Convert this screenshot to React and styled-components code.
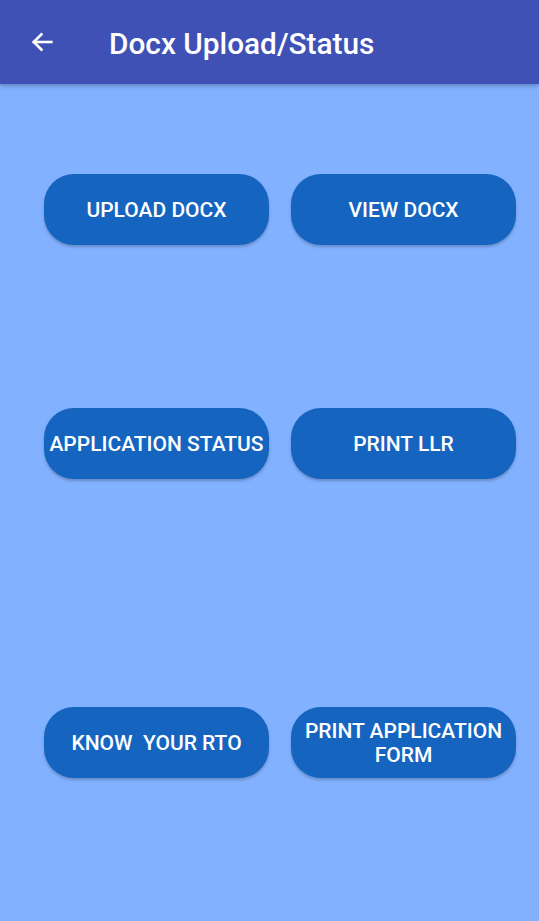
import React from 'react';
import styled, { createGlobalStyle } from 'styled-components';

const GlobalStyle = createGlobalStyle`
  html, body {
    margin: 0;
    padding: 0;
    background: #82b1ff;
    font-family: Roboto, "Noto Sans", sans-serif;
  }
`;

const Page = styled.div`
  width: 539px;
  height: 921px;
  background: #82b1ff;
  display: flex;
  flex-direction: column;
`;

const Toolbar = styled.header`
  height: 84px;
  background: #3f51b5;
  display: flex;
  align-items: center;
  box-shadow: 0 2px 4px rgba(0, 0, 0, 0.25);
  flex: none;
`;

const BackButton = styled.button`
  width: 84px;
  height: 84px;
  border: none;
  background: transparent;
  display: flex;
  align-items: center;
  justify-content: flex-start;
  padding: 0 0 0 28px;
  margin-right: 25px;
  color: #fff;
  cursor: pointer;
`;

const Title = styled.h1`
  margin: 0;
  color: #fff;
  font-size: 29.8px;
  font-weight: 500;
  padding-top: 2px;
`;

const Content = styled.main`
  display: flex;
  flex-direction: column;
  padding-left: 44px;
`;

const Row = styled.div`
  display: flex;
  gap: 22px;
  margin-top: ${(p) => p.$top}px;
`;

const ActionButton = styled.button`
  width: 225px;
  height: 71px;
  border: none;
  border-radius: 30px;
  background: #1565c0;
  color: #fff;
  font-family: Roboto, "Noto Sans", sans-serif;
  font-size: 21px;
  font-weight: 500;
  line-height: 24px;
  white-space: pre-line;
  padding: 0;
  box-shadow: 0 2px 3px rgba(0, 0, 0, 0.22);
  cursor: pointer;
`;

const rows = [
  { top: 90, items: ['UPLOAD DOCX', 'VIEW DOCX'] },
  { top: 163, items: ['APPLICATION STATUS', 'PRINT LLR'] },
  { top: 228, items: ['KNOW\u00a0 YOUR RTO', 'PRINT APPLICATION\nFORM'] },
];

export default function App() {
  return (
    <>
      <GlobalStyle />
      <Page>
        <Toolbar>
          <BackButton aria-label="back">
            <svg width="28" height="28" viewBox="0 0 24 24" fill="none" stroke="#fff" strokeWidth="2.2" strokeLinecap="square">
              <path d="M20 12H5" />
              <path d="M11.5 5.5L5 12l6.5 6.5" />
            </svg>
          </BackButton>
          <Title>Docx Upload/Status</Title>
        </Toolbar>
        <Content>
          {rows.map((r, i) => (
            <Row key={i} $top={r.top}>
              {r.items.map((t) => (
                <ActionButton key={t}>{t}</ActionButton>
              ))}
            </Row>
          ))}
        </Content>
      </Page>
    </>
  );
}
